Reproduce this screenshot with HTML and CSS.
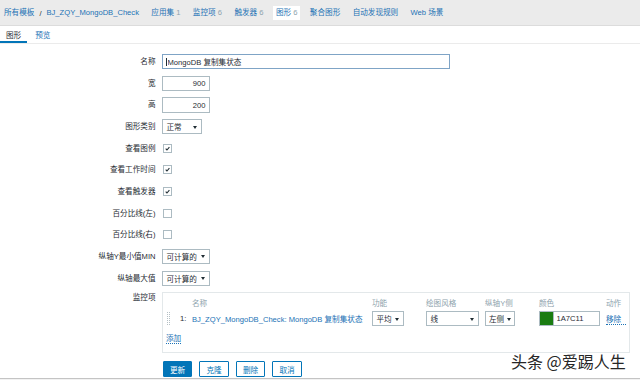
FILE: index.html
```html
<!DOCTYPE html>
<html lang="zh-CN">
<head>
<meta charset="utf-8">
<title>图形</title>
<link rel="stylesheet" href="styles.css">
</head>
<body>
<nav class="topnav">
  <a class="nav-item" href="#">所有模板</a><span class="sep">/</span><a class="nav-item" href="#">BJ_ZQY_MongoDB_Check</a>
  <a class="nav-item gap" href="#">应用集 <span class="cnt">1</span></a>
  <a class="nav-item gap" href="#">监控项 <span class="cnt">6</span></a>
  <a class="nav-item gap" href="#">触发器 <span class="cnt">6</span></a>
  <a class="nav-item gap active" href="#">图形 <span class="cnt">6</span></a>
  <a class="nav-item gap" href="#">聚合图形</a>
  <a class="nav-item gap" href="#">自动发现规则</a>
  <a class="nav-item gap" href="#">Web 场景</a>
</nav>

<div class="tabs">
  <span class="tab tab-active">图形</span>
  <a class="tab" href="#">预览</a>
</div>

<form class="form">
  <label class="lbl">名称</label>
  <div class="ctl"><span class="name-field"><span class="caret"></span><input class="input input-name" type="text" value="MongoDB 复制集状态"></span></div>

  <label class="lbl">宽</label>
  <div class="ctl"><input class="input input-num" type="text" value="900"></div>

  <label class="lbl">高</label>
  <div class="ctl"><input class="input input-num" type="text" value="200"></div>

  <label class="lbl">图形类别</label>
  <div class="ctl"><span class="select sel-type">正常</span></div>

  <label class="lbl">查看图例</label>
  <div class="ctl"><span class="check on"><svg viewBox="0 0 10 10"><path d="M2.4 5.3 L4.2 7.1 L7.7 3"/></svg></span></div>

  <label class="lbl">查看工作时间</label>
  <div class="ctl"><span class="check on"><svg viewBox="0 0 10 10"><path d="M2.4 5.3 L4.2 7.1 L7.7 3"/></svg></span></div>

  <label class="lbl">查看触发器</label>
  <div class="ctl"><span class="check on"><svg viewBox="0 0 10 10"><path d="M2.4 5.3 L4.2 7.1 L7.7 3"/></svg></span></div>

  <label class="lbl">百分比线(左)</label>
  <div class="ctl"><span class="check"></span></div>

  <label class="lbl">百分比线(右)</label>
  <div class="ctl"><span class="check"></span></div>

  <label class="lbl">纵轴Y最小值MIN</label>
  <div class="ctl"><span class="select sel-calc">可计算的</span></div>

  <label class="lbl">纵轴最大值</label>
  <div class="ctl"><span class="select sel-calc">可计算的</span></div>

  <label class="lbl lbl-top">监控项</label>
  <div class="items-box">
    <div class="items-grid items-head">
      <span></span><span></span>
      <span>名称</span>
      <span>功能</span>
      <span>绘图风格</span>
      <span>纵轴Y侧</span>
      <span>颜色</span>
      <span>动作</span>
    </div>
    <div class="items-grid items-row">
      <span class="drag"></span>
      <span class="num">1:</span>
      <a href="#">BJ_ZQY_MongoDB_Check: MongoDB 复制集状态</a>
      <span class="select sel-func">平均</span>
      <span class="select sel-style">线</span>
      <span class="select sel-axis">左侧</span>
      <span class="color"><span class="swatch"></span><input class="input input-color" type="text" value="1A7C11"></span>
      <a class="dotted" href="#">移除</a>
    </div>
    <div class="add-row"><a class="dotted" href="#">添加</a></div>
  </div>

  <span></span>
  <div class="buttons">
    <button class="btn btn-main" type="button">更新</button>
    <button class="btn" type="button">克隆</button>
    <button class="btn" type="button">删除</button>
    <button class="btn" type="button">取消</button>
  </div>
</form>

<div class="page-end"></div>

<div class="watermark">头条 @爱踢人生</div>
</body>
</html>
```

FILE: styles.css
```css
* {
  box-sizing: border-box;
  margin: 0;
  padding: 0;
}

body {
  font-family: "Liberation Sans", "Noto Sans CJK SC", sans-serif;
  font-size: 7.6px;
  color: #1f2c33;
  background: #fff;
  width: 640px;
  height: 380px;
  overflow: hidden;
  position: relative;
}

a {
  color: #1b72b5;
  text-decoration: none;
}

/* top navigation */
.topnav {
  height: 26px;
  background: #ebebeb;
  border-bottom: 1px solid #dcdcdc;
  display: flex;
  align-items: center;
  padding-left: 1px;
  padding-top: 1px;
}

.nav-item {
  padding: 3px 3px;
  line-height: 8px;
  white-space: nowrap;
}

.nav-item.gap {
  margin-left: 6.4px;
}

.nav-item.active {
  background: #fff;
}

.sep {
  margin: 0 2px;
  color: #1f2c33;
}

.cnt {
  color: #8ea3ad;
}

/* tabs */
.tabs {
  display: flex;
  height: 18px;
  border-bottom: 1px solid #ebebeb;
}

.tab {
  display: flex;
  align-items: center;
  padding: 1px 6px 0;
  border-bottom: 2px solid transparent;
}

.tab + .tab {
  margin-left: 2px;
}

.tab-active {
  border-bottom-color: #0275b8;
  color: #1f2c33;
}

/* form */
.form {
  display: grid;
  grid-template-columns: 155.5px 468px;
  column-gap: 6.5px;
  row-gap: 6.45px;
  padding-top: 10.2px;
}

.lbl {
  text-align: right;
  line-height: 15.2px;
  white-space: nowrap;
}

.lbl-top {
  line-height: 12px;
}

.ctl {
  height: 15.2px;
  display: flex;
  align-items: center;
}

.input {
  height: 15.2px;
  border: 1px solid #acbbc2;
  background: #fff;
  font-family: inherit;
  font-size: 7.6px;
  color: #1f2c33;
  padding: 0 3px;
  outline: none;
}

.name-field {
  position: relative;
  display: flex;
}

.caret {
  position: absolute;
  left: 3.5px;
  top: 3.5px;
  width: 1px;
  height: 8px;
  background: #1f2c33;
}

.input-name {
  width: 288px;
  border-color: #7fa4c6;
  padding-left: 4.5px;
}

.input-num {
  width: 47.5px;
  text-align: right;
}

.select {
  position: relative;
  display: flex;
  align-items: center;
  height: 15.2px;
  border: 1px solid #acbbc2;
  background: #fff;
  padding-left: 3.5px;
  white-space: nowrap;
}

.select::after {
  content: "";
  position: absolute;
  right: 4px;
  top: 5.5px;
  border-left: 2.2px solid transparent;
  border-right: 2.2px solid transparent;
  border-top: 3px solid #1f2c33;
}

.sel-type { width: 40px; }
.sel-calc { width: 48px; }
.sel-func { width: 32px; }
.sel-style { width: 53px; }
.sel-axis { width: 30px; padding-left: 3px; }
.sel-axis::after { right: 3px; }

.check {
  width: 9px;
  height: 9px;
  margin-left: 1px;
  border: 1px solid #acbbc2;
  background: #fff;
  display: flex;
}

.check svg {
  width: 100%;
  height: 100%;
}

.check path {
  fill: none;
  stroke: #1f2c33;
  stroke-width: 1.5;
}

/* items box */
.items-box {
  border: 1px solid #e3e8ea;
  padding: 3px 3px 7.6px 3px;
}

.items-grid {
  display: grid;
  grid-template-columns: 12px 14px 180px 54px 59px 54px 67px 1fr;
  align-items: center;
  white-space: nowrap;
}

.items-head {
  height: 12px;
  color: #8ea3ad;
}

.items-row {
  padding: 3px 0;
}

.drag {
  width: 3px;
  height: 13px;
  margin-left: 0.5px;
  border-left: 1px dotted #b5c0c5;
  border-right: 1px dotted #b5c0c5;
}

.num {
  padding-left: 2px;
}

.color {
  display: flex;
}

.swatch {
  width: 15px;
  height: 15.2px;
  border: 1px solid #acbbc2;
  background: #1a7c11;
}

.input-color {
  width: 46px;
  border-left: none;
  padding-left: 2.5px;
}

.dotted {
  border-bottom: 1px dotted #1b72b5;
}

.add-row {
  margin-top: 5px;
  line-height: 10px;
}

/* buttons */
.buttons {
  display: flex;
  gap: 7.3px;
  margin-top: 2px;
  margin-left: 1px;
}

.btn {
  height: 15.2px;
  padding: 0 6px;
  border: 1px solid #0275b8;
  background: #fff;
  color: #0275b8;
  font-family: inherit;
  font-size: 7.6px;
  border-radius: 1px;
}

.btn-main {
  background: #0275b8;
  color: #fff;
}

.page-end {
  margin-top: 1px;
  height: 4px;
  border-top: 1px solid #c4c4c4;
  background: #f2f2f2;
}

/* watermark overlay */
.watermark {
  position: absolute;
  left: 511px;
  top: 351px;
  font-family: "Noto Sans CJK SC", sans-serif;
  font-size: 16px;
  line-height: 20px;
  color: #262626;
  text-shadow: 0 0 2px #fff, 0 0 2px #fff;
  white-space: nowrap;
}
```
